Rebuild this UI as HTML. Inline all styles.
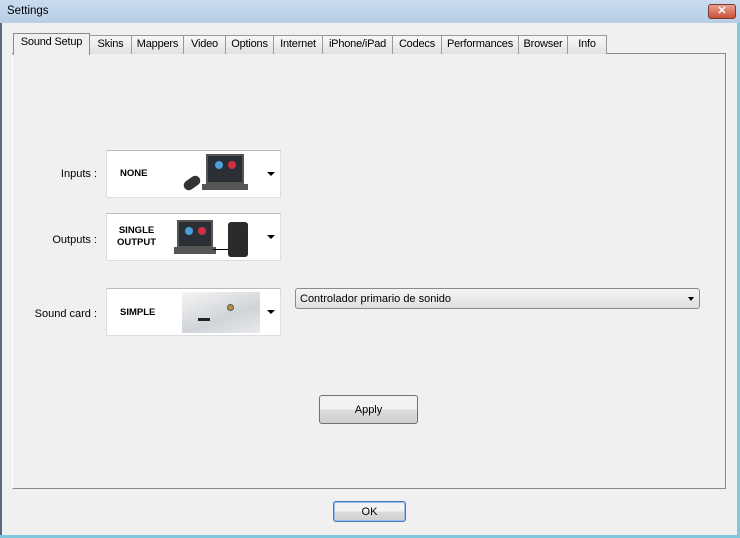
<!DOCTYPE html>
<html><head><style>
*{margin:0;padding:0;box-sizing:border-box}
body{width:740px;height:538px;background:#f0f0f0;font-family:"Liberation Sans",sans-serif;font-size:11px;color:#000;position:relative;overflow:hidden}
.a{position:absolute}
.tab{position:absolute;top:35px;height:19px;border:1px solid #9a9a9a;border-bottom:none;background:linear-gradient(#f7f7f7,#e2e2e2);text-align:center;line-height:17px;font-size:11px;letter-spacing:-0.2px}
.lbl{position:absolute;text-align:right;width:80px;left:17px;font-size:11px}
.box{position:absolute;left:106px;width:175px;height:48px;background:#fff;border:1px solid #ddd;border-top:1px solid #bbb}
.bt{position:absolute;font-weight:bold;font-size:9.5px;text-align:center;line-height:12px}
.arr{position:absolute;right:5px;top:21px;width:0;height:0;border-left:4px solid transparent;border-right:4px solid transparent;border-top:4px solid #000}
</style></head><body>
<div class="a" style="left:0;top:0;width:740px;height:23px;background:linear-gradient(#c9dcef,#b8cee6)"></div>
<div class="a" style="left:7px;top:5px;font-size:11.5px">Settings</div>
<div class="a" style="left:708px;top:4px;width:28px;height:15px;border:1px solid #7a3a30;border-radius:3px;background:linear-gradient(#e8a090,#c8503a);color:#fff;font-weight:bold;text-align:center;line-height:13px;font-size:11px">✕</div>
<div class="a" style="left:0;top:23px;width:2px;height:515px;background:#5a6a7a"></div>
<div class="a" style="right:0;top:23px;width:3px;height:515px;background:#7dc8dc"></div>
<div class="a" style="left:0;bottom:0;width:740px;height:3px;background:#7dc8dc"></div>
<div class="a" style="left:12px;top:53px;width:714px;height:436px;border:1px solid #fff;border-right:1px solid #8a8a8a;border-bottom:1px solid #8a8a8a;background:#f0f0f0"></div>
<div class="a" style="left:12px;top:53px;width:714px;height:1px;background:#8a8a8a"></div>
<div class="tab" style="left:89px;width:43px">Skins</div>
<div class="tab" style="left:131px;width:53px">Mappers</div>
<div class="tab" style="left:183px;width:43px">Video</div>
<div class="tab" style="left:225px;width:49px">Options</div>
<div class="tab" style="left:273px;width:50px">Internet</div>
<div class="tab" style="left:322px;width:71px">iPhone/iPad</div>
<div class="tab" style="left:392px;width:50px">Codecs</div>
<div class="tab" style="left:441px;width:78px">Performances</div>
<div class="tab" style="left:518px;width:50px">Browser</div>
<div class="tab" style="left:567px;width:40px">Info</div>
<div class="tab" style="left:13px;top:33px;height:22px;width:77px;background:#f0f0f0;border-color:#8a8a8a;line-height:17px">Sound Setup</div>
<div class="lbl" style="top:168px">Inputs :</div>
<div class="lbl" style="top:234px">Outputs :</div>
<div class="lbl" style="top:308px">Sound card :</div>
<div class="box" style="top:150px"><div class="bt" style="left:13px;top:17px">NONE</div>
<div class="a" style="left:99px;top:3px;width:38px;height:30px;background:#2a2f36;border:2px solid #555"><div class="a" style="left:7px;top:5px;width:8px;height:8px;border-radius:4px;background:#4aa0d8"></div><div class="a" style="left:20px;top:5px;width:8px;height:8px;border-radius:4px;background:#d03040"></div></div>
<div class="a" style="left:95px;top:33px;width:46px;height:6px;background:#555"></div>
<div class="a" style="left:76px;top:27px;width:18px;height:10px;border-radius:6px;background:#333;transform:rotate(-35deg)"></div>
<div class="arr"></div></div>
<div class="box" style="top:213px"><div class="bt" style="left:10px;top:11px">SINGLE<br>OUTPUT</div>
<div class="a" style="left:70px;top:6px;width:36px;height:28px;background:#2a2f36;border:2px solid #555"><div class="a" style="left:6px;top:5px;width:8px;height:8px;border-radius:4px;background:#4aa0d8"></div><div class="a" style="left:19px;top:5px;width:8px;height:8px;border-radius:4px;background:#d03040"></div></div>
<div class="a" style="left:67px;top:33px;width:42px;height:7px;background:#555"></div>
<div class="a" style="left:106px;top:35px;width:16px;height:1px;background:#000"></div>
<div class="a" style="left:121px;top:8px;width:20px;height:35px;background:#2b2b2b;border-radius:3px"></div>
<div class="arr"></div></div>
<div class="box" style="top:288px"><div class="bt" style="left:13px;top:18px">SIMPLE</div>
<div class="a" style="left:75px;top:3px;width:78px;height:41px;background:linear-gradient(160deg,#f4f4f4,#d0d4d8 60%,#e8eaec)"><div class="a" style="left:45px;top:12px;width:7px;height:7px;border-radius:4px;background:#b8953a;border:1px solid #555"></div><div class="a" style="left:16px;top:26px;width:12px;height:3px;background:#222"></div></div>
<div class="arr"></div></div>
<div class="a" style="left:295px;top:288px;width:405px;height:21px;border:1px solid #8a8a8a;border-radius:3px;background:linear-gradient(#f6f6f6,#dedede);padding:4px 4px;font-size:11px">Controlador primario de sonido<div class="a" style="right:5px;top:8px;border-left:3.5px solid transparent;border-right:3.5px solid transparent;border-top:4px solid #000"></div></div>
<div class="a" style="left:319px;top:395px;width:99px;height:29px;border:1px solid #707070;border-radius:3px;background:linear-gradient(#f2f2f2 50%,#dcdcdc 50%,#d0d0d0);text-align:center;line-height:29px;font-size:11px">Apply</div>
<div class="a" style="left:333px;top:501px;width:73px;height:21px;border:1px solid #3c7fb1;border-radius:3px;background:linear-gradient(#f2f2f2 50%,#dcdcdc 50%,#d0d0d0);box-shadow:inset 0 0 0 1px #9be;text-align:center;line-height:20px;font-size:11px">OK</div>
</body></html>
